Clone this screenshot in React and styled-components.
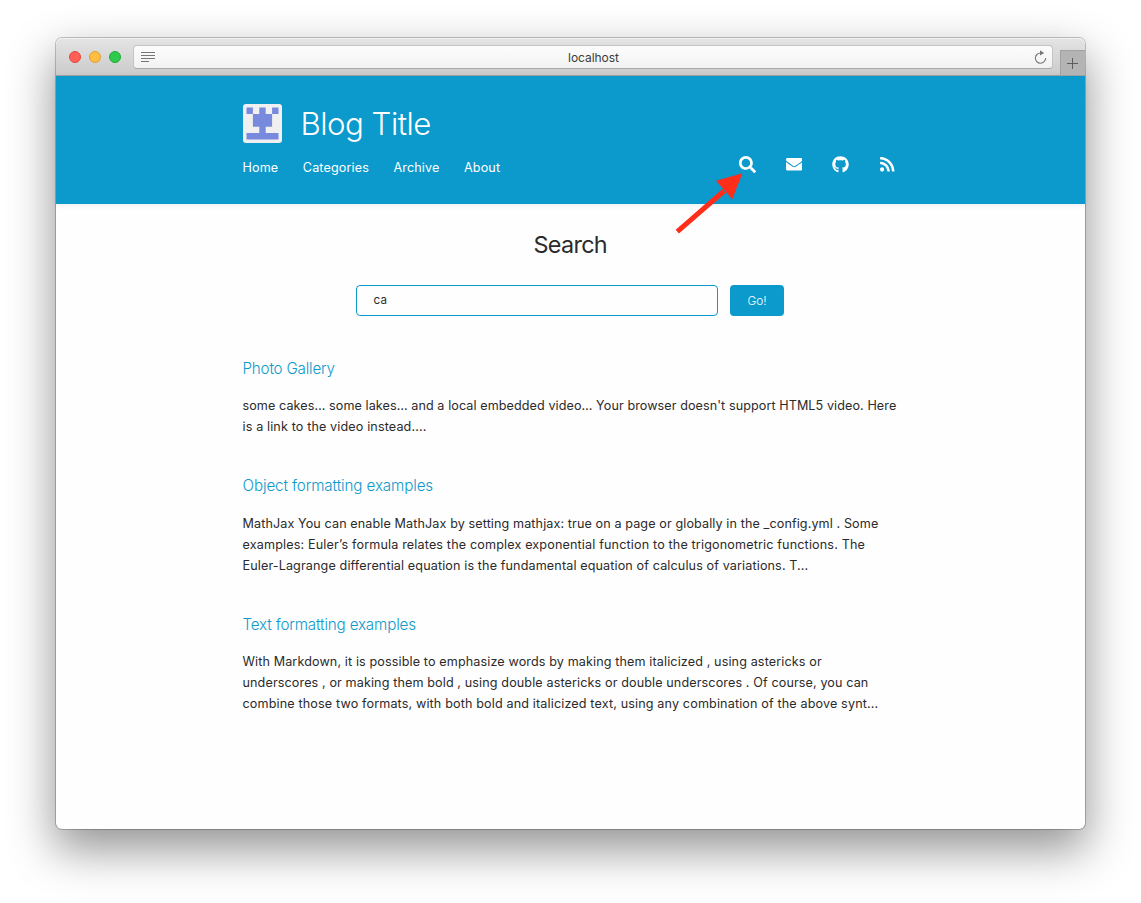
import React from "react";
import styled, { createGlobalStyle } from "styled-components";
import { FaSearch, FaEnvelope, FaGithub, FaRss } from "react-icons/fa";

const blue = "#0c99cc";

const GlobalStyle = createGlobalStyle`
  * { box-sizing: border-box; }
  body { margin: 0; background: #fff; font-family: Inter, "Liberation Sans", sans-serif; color: #2b2b2b; }
  h1, h2, h3, p { margin: 0; font-weight: 400; }
  a { color: inherit; text-decoration: none; }
`;

const Desktop = styled.div`
  height: 903px;
  padding: 38px 56px 74px;
  overflow: hidden;
`;

const Window = styled.div`
  position: relative;
  width: 1029px;
  height: 791px;
  border-radius: 6px;
  background: #fefefe;
  box-shadow: 0 0 0 1px rgba(0, 0, 0, 0.22), 0 19px 46px 2px rgba(0, 0, 0, 0.42);
`;

const Toolbar = styled.div`
  display: flex;
  align-items: flex-start;
  height: 38px;
  padding-left: 13px;
  border-radius: 6px 6px 0 0;
  border-bottom: 1px solid #a3a3a3;
  background: linear-gradient(#e4e4e4, #cbcbcb);
  box-shadow: inset 0 1px 0 #f2f2f2;
`;

const Lights = styled.div`
  display: flex;
  gap: 8px;
  margin: 13px 12px 0 0;
`;

const Light = styled.span`
  width: 12px;
  height: 12px;
  border-radius: 50%;
  background: ${(p) => p.$fill};
  border: 1px solid ${(p) => p.$edge};
`;

const AddressBar = styled.div`
  display: flex;
  align-items: center;
  justify-content: space-between;
  width: 920px;
  height: 24px;
  margin: 7px 7px 0 0;
  padding: 0 5px 0 7px;
  border-radius: 4px;
  border: 1px solid #c4c4c4;
  border-bottom-color: #a9a9a9;
  background: linear-gradient(#fcfcfc, #f2f2f2);
  color: #3c3c3c;
  font-size: 12px;
`;

const Host = styled.span`
  margin-right: 2px;
  letter-spacing: -0.05px;
`;

const NewTab = styled.div`
  display: flex;
  align-items: center;
  justify-content: center;
  width: 25px;
  height: 25px;
  margin-top: 12px;
  padding-right: 2px;
  background: #b4b4b4;
  border-top: 1px solid #a2a2a2;
  border-left: 1px solid #a2a2a2;
`;

const Header = styled.header`
  display: flex;
  justify-content: space-between;
  height: 128px;
  padding: 28px 190px 0 187px;
  background: ${blue};
  box-shadow: 0 1px 6px rgba(0, 0, 0, 0.08);
  color: #fff;
`;

const Brand = styled.div`
  display: flex;
  align-items: center;
  gap: 18.5px;
  height: 39px;
`;

const BlogTitle = styled.h1`
  padding-top: 1px;
  font-size: 31.2px;
  font-weight: 300;
  line-height: 39px;
  letter-spacing: -0.5px;
`;

const Nav = styled.nav`
  display: flex;
  gap: 24.5px;
  margin: 15px 0 0 -0.5px;
  font-size: 12.6px;
  line-height: 20px;
  letter-spacing: 0.13px;
`;

const Social = styled.div`
  display: flex;
  align-items: flex-start;
  gap: 29.7px;
  margin-top: 52px;
  height: 17px;

  svg { display: block; }
`;

const Content = styled.main`
  position: relative;
  padding: 24px 187px 0 186.5px;
`;

const PageTitle = styled.h2`
  text-align: center;
  font-size: 23.4px;
  line-height: 34px;
  letter-spacing: -0.7px;
`;

const SearchForm = styled.div`
  display: flex;
  gap: 12px;
  margin: 23px 0 0 113.5px;
`;

const Field = styled.div`
  width: 362px;
  height: 31px;
  padding-left: 16.5px;
  border: 1px solid ${blue};
  border-radius: 4px;
  font-size: 11.6px;
  line-height: 28px;
  letter-spacing: 0.2px;
`;

const GoButton = styled.button`
  width: 54px;
  height: 31px;
  padding: 0;
  border: 0;
  border-radius: 4px;
  background: ${blue};
  color: #fff;
  font: 300 11.8px/30px Inter, "Liberation Sans", sans-serif;
`;

const Results = styled.div`
  display: flex;
  flex-direction: column;
  gap: 38px;
  margin-top: 42px;
`;

const ResultTitle = styled.h3`
  color: ${blue};
  font-size: 15.2px;
  font-weight: 300;
  line-height: 22px;
  letter-spacing: ${(p) => p.$spacing}px;
`;

const Excerpt = styled.p`
  margin-top: ${(p) => p.$gap}px;
`;

const Line = styled.span`
  display: block;
  width: max-content;
  font-size: 12.6px;
  line-height: 21px;
  white-space: nowrap;
  letter-spacing: ${(p) => p.$spacing}px;
`;

const Arrow = styled.svg`
  position: absolute;
  left: 614px;
  top: 129px;
`;

const results = [
  {
    title: ["Photo Gallery", -0.2],
    gap: 15,
    lines: [
      ["some cakes… some lakes… and a local embedded video… Your browser doesn't support HTML5 video. Here", 0.081],
      ["is a link to the video instead....", 0.13],
    ],
  },
  {
    title: ["Object formatting examples", -0.11],
    gap: 16,
    lines: [
      ["MathJax You can enable MathJax by setting mathjax: true on a page or globally in the _config.yml . Some", 0.105],
      ["examples: Euler’s formula relates the complex exponential function to the trigonometric functions. The", 0.15],
      ["Euler-Lagrange differential equation is the fundamental equation of calculus of variations. T...", 0.122],
    ],
  },
  {
    title: ["Text formatting examples", -0.16],
    gap: 15,
    lines: [
      ["With Markdown, it is possible to emphasize words by making them italicized , using astericks or", 0.12],
      ["underscores , or making them bold , using double astericks or double underscores . Of course, you can", 0.115],
      ["combine those two formats, with both bold and italicized text, using any combination of the above synt...", 0.14],
    ],
  },
];

const ReaderIcon = () => (
  <svg width="14" height="11" viewBox="0 0 14 11" stroke="#777" strokeWidth="1">
    <path d="M0 .5h14M0 3.5h14M0 6.5h14M0 9.5h8" />
  </svg>
);

const ReloadIcon = () => (
  <svg width="13" height="15" viewBox="0 0 13 15" fill="none">
    <path d="M6.5 3A5.1 5.1 0 1 0 11.6 8" stroke="#777" strokeWidth="1.1" />
    <path d="M6 .3v5.2L10.2 3z" fill="#777" />
  </svg>
);

const Avatar = () => (
  <svg width="39" height="39" viewBox="0 0 39 39">
    <rect width="39" height="39" rx="3" fill="#f0f0f0" />
    <path
      fill="#788add"
      d="M3.5 3.5h6.4v6.4H3.5zM29.1 3.5h6.4v6.4h-6.4zM16.3 3.5h6.4v6.4h6.4v12.8h-6.4v6.4h12.8v6.4h-32v-6.4h12.8v-6.4H9.9V9.9h6.4z"
    />
  </svg>
);

export default function App() {
  return (
    <>
      <GlobalStyle />
      <Desktop>
        <Window>
          <Toolbar>
            <Lights>
              <Light $fill="#ff5f57" $edge="#e2483f" />
              <Light $fill="#ffbd42" $edge="#dfa034" />
              <Light $fill="#2dca4c" $edge="#1fad36" />
            </Lights>
            <AddressBar>
              <ReaderIcon />
              <Host>localhost</Host>
              <ReloadIcon />
            </AddressBar>
            <NewTab>
              <svg width="11" height="11" viewBox="0 0 11 11" stroke="#5c5c5c">
                <path d="M5.5 0v11M0 5.5h11" />
              </svg>
            </NewTab>
          </Toolbar>
          <Header>
            <div>
              <Brand>
                <Avatar />
                <BlogTitle>Blog Title</BlogTitle>
              </Brand>
              <Nav>
                <a>Home</a>
                <a>Categories</a>
                <a>Archive</a>
                <a>About</a>
              </Nav>
            </div>
            <Social>
              <FaSearch size={17} />
              <FaEnvelope size={16.5} />
              <FaGithub size={17} />
              <FaRss size={16.5} />
            </Social>
          </Header>
          <Content>
            <PageTitle>Search</PageTitle>
            <SearchForm>
              <Field>ca</Field>
              <GoButton>Go!</GoButton>
            </SearchForm>
            <Results>
              {results.map(({ title, gap, lines }) => (
                <article key={title[0]}>
                  <ResultTitle $spacing={title[1]}>{title[0]}</ResultTitle>
                  <Excerpt $gap={gap}>
                    {lines.map(([text, spacing]) => (
                      <Line key={text} $spacing={spacing}>{text}</Line>
                    ))}
                  </Excerpt>
                </article>
              ))}
            </Results>
          </Content>
          <Arrow width="80" height="70" viewBox="0 0 80 70">
            <path d="M7.3 64.7L54 24" stroke="#ff2d1a" strokeWidth="5" />
            <path d="M72.3 6.3L46 13.7L62.3 32.3z" fill="#ff2d1a" />
          </Arrow>
        </Window>
      </Desktop>
    </>
  );
}
